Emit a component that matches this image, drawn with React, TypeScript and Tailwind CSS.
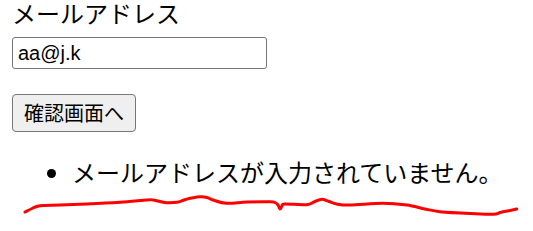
import React from "react";

const pts: [number, number][] = [
  [25, 212], [32, 208.5], [40, 205.7], [60, 205], [86.7, 204], [120, 202.3],
  [146.7, 200], [153, 200], [160, 201.5], [166.7, 202.7], [176.7, 202.3],
  [184, 200], [190, 198.3], [200, 196.7], [207, 197.5], [213, 200],
  [226.7, 203.3], [246.7, 202], [270, 201.7], [275, 202.5], [278, 205],
  [280, 209], [282, 206], [285, 204], [306.7, 204.7], [314, 202],
  [321.7, 199.3], [329, 201.5], [336.7, 204], [350, 205], [383, 203.3],
  [406.7, 205], [425, 209], [440, 211.7], [470, 213.5], [493, 214.3],
  [500, 212.5], [503, 211.7], [510, 210.5], [516.7, 209],
];

function smoothPath(p: [number, number][]): string {
  let d = `M${p[0][0]},${p[0][1]}`;
  for (let i = 0; i < p.length - 1; i++) {
    const p0 = p[i - 1] || p[i];
    const p1 = p[i];
    const p2 = p[i + 1];
    const p3 = p[i + 2] || p2;
    const c1x = p1[0] + (p2[0] - p0[0]) / 6;
    const c1y = p1[1] + (p2[1] - p0[1]) / 6;
    const c2x = p2[0] - (p3[0] - p1[0]) / 6;
    const c2y = p2[1] - (p3[1] - p1[1]) / 6;
    d += ` C${c1x.toFixed(1)},${c1y.toFixed(1)} ${c2x.toFixed(1)},${c2y.toFixed(1)} ${p2[0]},${p2[1]}`;
  }
  return d;
}

export default function App() {
  return (
    <div className="relative w-[533px] h-[231px] bg-white text-black overflow-hidden font-['Noto_Sans_CJK_JP',sans-serif]">
      <div className="px-[12px]">
        <div className="text-[24px] leading-[26px]">メールアドレス</div>
        <input
          type="text"
          defaultValue="aa@j.k"
          className="mt-[11px] block w-[255px] h-[32px] border border-[#767676] rounded-[3px] px-[5px] text-[20px] font-['Liberation_Sans',Arial,sans-serif] text-black outline-none"
        />
        <button className="mt-[25px] block h-[38px] px-[11px] bg-[#efefef] border border-[#767676] rounded-[4px] text-[20px] leading-[24px] text-black">
          確認画面へ
        </button>
        <ul className="mt-[27px] list-disc pl-[60px] text-[24px] leading-[26px]">
          <li>メールアドレスが入力されていません。</li>
        </ul>
      </div>
      <svg className="absolute left-0 top-0 pointer-events-none" width="533" height="231" viewBox="0 0 533 231">
        <path d={smoothPath(pts)} fill="none" stroke="#ff0000" strokeWidth="3" strokeLinecap="round" strokeLinejoin="round" />
      </svg>
    </div>
  );
}
